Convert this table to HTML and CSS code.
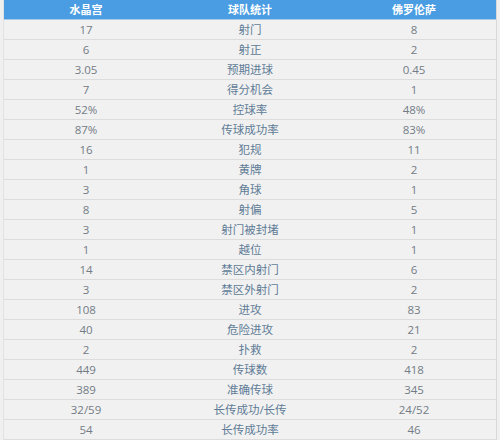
FILE: index.html
```html
<!DOCTYPE html>
<html>
<head>
<meta charset="utf-8">
<link rel="stylesheet" href="styles.css">
</head>
<body>
<div class="table">
  <div class="row head"><div>水晶宫</div><div>球队统计</div><div>佛罗伦萨</div></div>
  <div class="row"><div>17</div><div class="lbl">射门</div><div>8</div></div>
  <div class="row"><div>6</div><div class="lbl">射正</div><div>2</div></div>
  <div class="row"><div>3.05</div><div class="lbl">预期进球</div><div>0.45</div></div>
  <div class="row"><div>7</div><div class="lbl">得分机会</div><div>1</div></div>
  <div class="row"><div>52%</div><div class="lbl">控球率</div><div>48%</div></div>
  <div class="row"><div>87%</div><div class="lbl">传球成功率</div><div>83%</div></div>
  <div class="row"><div>16</div><div class="lbl">犯规</div><div>11</div></div>
  <div class="row"><div>1</div><div class="lbl">黄牌</div><div>2</div></div>
  <div class="row"><div>3</div><div class="lbl">角球</div><div>1</div></div>
  <div class="row"><div>8</div><div class="lbl">射偏</div><div>5</div></div>
  <div class="row"><div>3</div><div class="lbl">射门被封堵</div><div>1</div></div>
  <div class="row"><div>1</div><div class="lbl">越位</div><div>1</div></div>
  <div class="row"><div>14</div><div class="lbl">禁区内射门</div><div>6</div></div>
  <div class="row"><div>3</div><div class="lbl">禁区外射门</div><div>2</div></div>
  <div class="row"><div>108</div><div class="lbl">进攻</div><div>83</div></div>
  <div class="row"><div>40</div><div class="lbl">危险进攻</div><div>21</div></div>
  <div class="row"><div>2</div><div class="lbl">扑救</div><div>2</div></div>
  <div class="row"><div>449</div><div class="lbl">传球数</div><div>418</div></div>
  <div class="row"><div>389</div><div class="lbl">准确传球</div><div>345</div></div>
  <div class="row"><div>32/59</div><div class="lbl">长传成功/长传</div><div>24/52</div></div>
  <div class="row"><div>54</div><div class="lbl">长传成功率</div><div>46</div></div>
</div>
</body>
</html>
```
FILE: styles.css
```css
html, body {
  margin: 0;
  padding: 0;
  background: #f0f0f0;
}
body {
  font-family: "Open Sans", "Noto Sans CJK SC", sans-serif;
  width: 500px;
  height: 440px;
  overflow: hidden;
}
.table {
  margin: 0 3px;
  border-left: 1px solid #e2e2e2;
  border-right: 1px solid #d8d8d8;
  background: #f1f1f1;
}
.row {
  display: grid;
  grid-template-columns: 1fr 1fr 1fr;
  height: 19px;
  border-bottom: 1px solid #dcdcdc;
  align-items: center;
  text-align: center;
  font-size: 11.5px;
  color: #737c86;
  line-height: 19px;
}
.row .lbl {
  color: #607c96;
}
.row.head {
  background: #4a9de2;
  color: #ffffff;
  font-weight: bold;
  font-size: 11px;
  height: 19px;
  border-bottom: 1px solid #a9cbe8;
}
```
